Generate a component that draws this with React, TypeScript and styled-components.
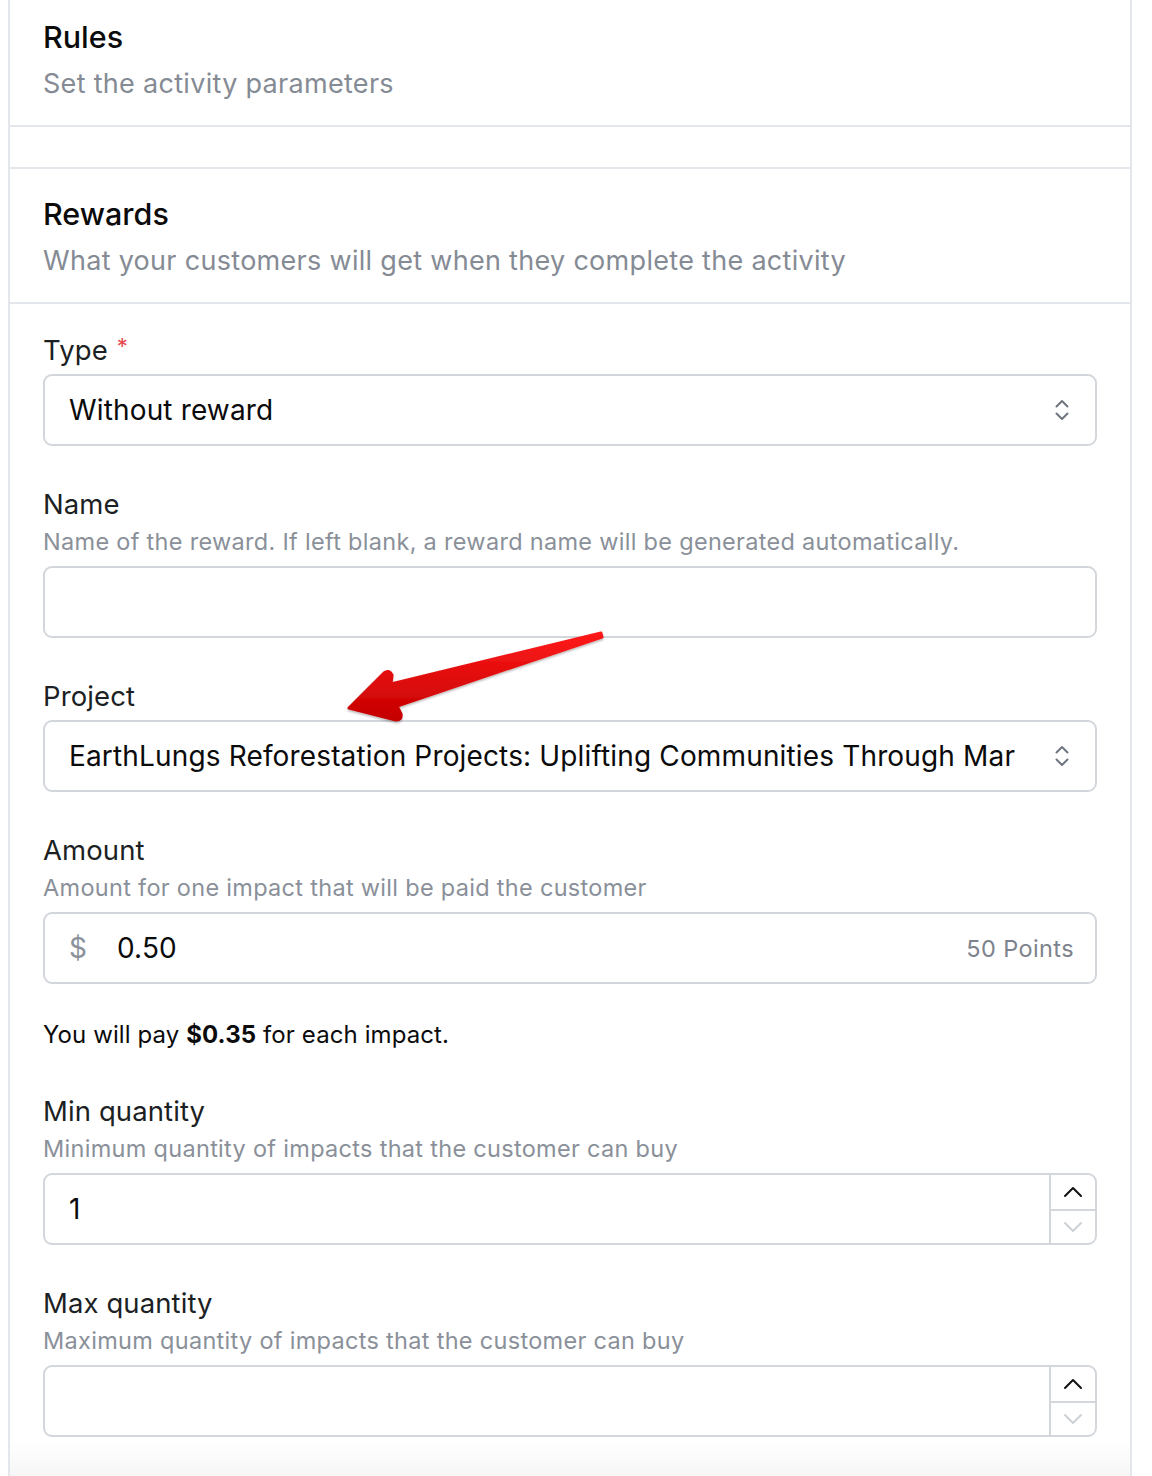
import React from "react";
import styled, { createGlobalStyle } from "styled-components";

const GlobalStyle = createGlobalStyle`
  html, body {
    margin: 0;
    padding: 0;
    background: #ffffff;
  }
  body {
    font-family: Inter, "Noto Sans", "Liberation Sans", sans-serif;
    color: #111827;
    -webkit-font-smoothing: antialiased;
  }
`;

const Page = styled.div`
  position: relative;
  padding: 0 20px 0 8px;
  height: 1476px;
  overflow: hidden;
`;

const Panel = styled.div`
  border-left: 2px solid #e3e6ea;
  border-right: 2px solid #e3e6ea;
  margin-top: -8px;
`;

const Section = styled.div`
  padding: 26px 33px 23px;
  border-bottom: 2px solid #e3e6ea;
`;

const Spacer = styled.div`
  height: 40px;
  border-bottom: 2px solid #e3e6ea;
`;

const Title = styled.h2`
  margin: 0;
  font-size: 30.5px;
  line-height: 38px;
  font-weight: 500;
  color: #0b0b0c;
`;

const Subtitle = styled.p`
  margin: 10px 0 0;
  font-size: 27px;
  line-height: 36px;
  letter-spacing: 0.3px;
  color: #858b94;
`;

const Form = styled.div`
  display: flex;
  flex-direction: column;
  gap: 40px;
  padding: 24px 33px 4px;
`;

const Field = styled.div`
  display: flex;
  flex-direction: column;
`;

const Label = styled.label`
  font-size: 27.5px;
  line-height: 36px;
  letter-spacing: 0.1px;
  color: #1c1f24;
`;

const Required = styled.span`
  color: #e5484d;
  font-size: 22px;
  margin-left: 9px;
  vertical-align: 6px;
`;

const Help = styled.div`
  margin-top: 4px;
  font-size: 23.5px;
  line-height: 32px;
  letter-spacing: 0.3px;
  color: #8a9099;
`;

const Box = styled.div<{ $after?: "label" | "help" }>`
  margin-top: ${(p) => (p.$after === "help" ? 8 : 6)}px;
  height: 72px;
  box-sizing: border-box;
  border: 2px solid #d3d7dc;
  border-radius: 9px;
  display: flex;
  align-items: center;
  background: #fff;
  overflow: hidden;
`;

const Value = styled.div<{ $clip?: boolean }>`
  flex: 1;
  min-width: 0;
  padding-left: 24px;
  font-size: 28px;
  letter-spacing: 0.15px;
  color: #0b0b0c;
  white-space: nowrap;
  overflow: hidden;
  ${(p) => p.$clip && "margin-right: 8px;"}
`;

const Chevrons = styled.span`
  display: flex;
  width: 22px;
  margin-right: 22px;
  justify-content: center;
  color: #70767f;
`;

const Prefix = styled.span`
  padding-left: 24px;
  font-size: 28px;
  color: #8c929b;
  width: 24px;
`;

const Suffix = styled.span`
  padding-right: 21px;
  font-size: 23.5px;
  letter-spacing: 0.4px;
  color: #7d838c;
`;

const Note = styled.p`
  margin: 33px 0 0;
  font-size: 24px;
  line-height: 36px;
  letter-spacing: 0.1px;
  color: #0b0b0c;

  b {
    font-weight: 700;
  }
`;

const Spinner = styled.div`
  align-self: stretch;
  width: 44px;
  border-left: 2px solid #d3d7dc;
  display: grid;
  grid-template-rows: 1fr 1fr;
`;

const SpinButton = styled.div<{ $dim?: boolean }>`
  display: flex;
  align-items: center;
  justify-content: center;
  color: ${(p) => (p.$dim ? "#cdd1d6" : "#111")};

  & + & {
    border-top: 2px solid #d3d7dc;
  }
`;

const Fade = styled.div`
  height: 44px;
  background: linear-gradient(#ffffff, #f4f4f4);
`;

const ArrowLayer = styled.svg`
  position: absolute;
  left: 320px;
  top: 620px;
  overflow: visible;
  pointer-events: none;
`;

const UpDown = () => (
  <svg width="16" height="24" viewBox="0 0 16 24" fill="none" stroke="currentColor" strokeWidth="2" strokeLinecap="round" strokeLinejoin="round">
    <path d="M2.5 8.5 8 3l5.5 5.5" />
    <path d="M2.5 15.5 8 21l5.5-5.5" />
  </svg>
);

const Caret = ({ down }: { down?: boolean }) => (
  <svg width="20" height="12" viewBox="0 0 20 12" fill="none" stroke="currentColor" strokeWidth="2" strokeLinecap="round" strokeLinejoin="round">
    <path d={down ? "M2 2l8 8 8-8" : "M2 10l8-8 8 8"} />
  </svg>
);

const NumberBox = ({ value }: { value?: string }) => (
  <Box $after="help">
    <Value>{value}</Value>
    <Spinner>
      <SpinButton>
        <Caret />
      </SpinButton>
      <SpinButton $dim>
        <Caret down />
      </SpinButton>
    </Spinner>
  </Box>
);

export default function App() {
  return (
    <Page>
      <GlobalStyle />
      <Panel>
        <Section>
          <Title>Rules</Title>
          <Subtitle>Set the activity parameters</Subtitle>
        </Section>
        <Spacer />
        <Section>
          <Title>Rewards</Title>
          <Subtitle>What your customers will get when they complete the activity</Subtitle>
        </Section>
        <Form>
          <Field>
            <Label>
              Type<Required>*</Required>
            </Label>
            <Box>
              <Value>Without reward</Value>
              <Chevrons>
                <UpDown />
              </Chevrons>
            </Box>
          </Field>
          <Field>
            <Label>Name</Label>
            <Help>Name of the reward. If left blank, a reward name will be generated automatically.</Help>
            <Box $after="help" />
          </Field>
          <Field>
            <Label>Project</Label>
            <Box>
              <Value $clip>EarthLungs Reforestation Projects: Uplifting Communities Through Mar</Value>
              <Chevrons>
                <UpDown />
              </Chevrons>
            </Box>
          </Field>
          <Field>
            <Label>Amount</Label>
            <Help>Amount for one impact that will be paid the customer</Help>
            <Box $after="help">
              <Prefix>$</Prefix>
              <Value>0.50</Value>
              <Suffix>50 Points</Suffix>
            </Box>
            <Note>
              You will pay <b>$0.35</b> for each impact.
            </Note>
          </Field>
          <Field>
            <Label>Min quantity</Label>
            <Help>Minimum quantity of impacts that the customer can buy</Help>
            <NumberBox value="1" />
          </Field>
          <Field>
            <Label>Max quantity</Label>
            <Help>Maximum quantity of impacts that the customer can buy</Help>
            <NumberBox />
          </Field>
        </Form>
        <Fade />
      </Panel>
      <ArrowLayer width="290" height="110" viewBox="0 0 290 110">
        <defs>
          <linearGradient id="arrowFill" x1="0" y1="0" x2="0" y2="1">
            <stop offset="0" stopColor="#ff1a1a" />
            <stop offset="1" stopColor="#c40000" />
          </linearGradient>
          <filter id="arrowShadow" x="-10%" y="-30%" width="120%" height="160%">
            <feDropShadow dx="0" dy="1.5" stdDeviation="1.2" floodColor="#000" floodOpacity="0.3" />
          </filter>
        </defs>
        <path
          d="M29 88 L64 53 Q69 49 72 55 L71 64 L281 13 L282 17 L77 86 L81 94 Q82 100 76 100 Z"
          fill="url(#arrowFill)"
          stroke="url(#arrowFill)"
          strokeWidth="3"
          strokeLinejoin="round"
          filter="url(#arrowShadow)"
        />
      </ArrowLayer>
    </Page>
  );
}
